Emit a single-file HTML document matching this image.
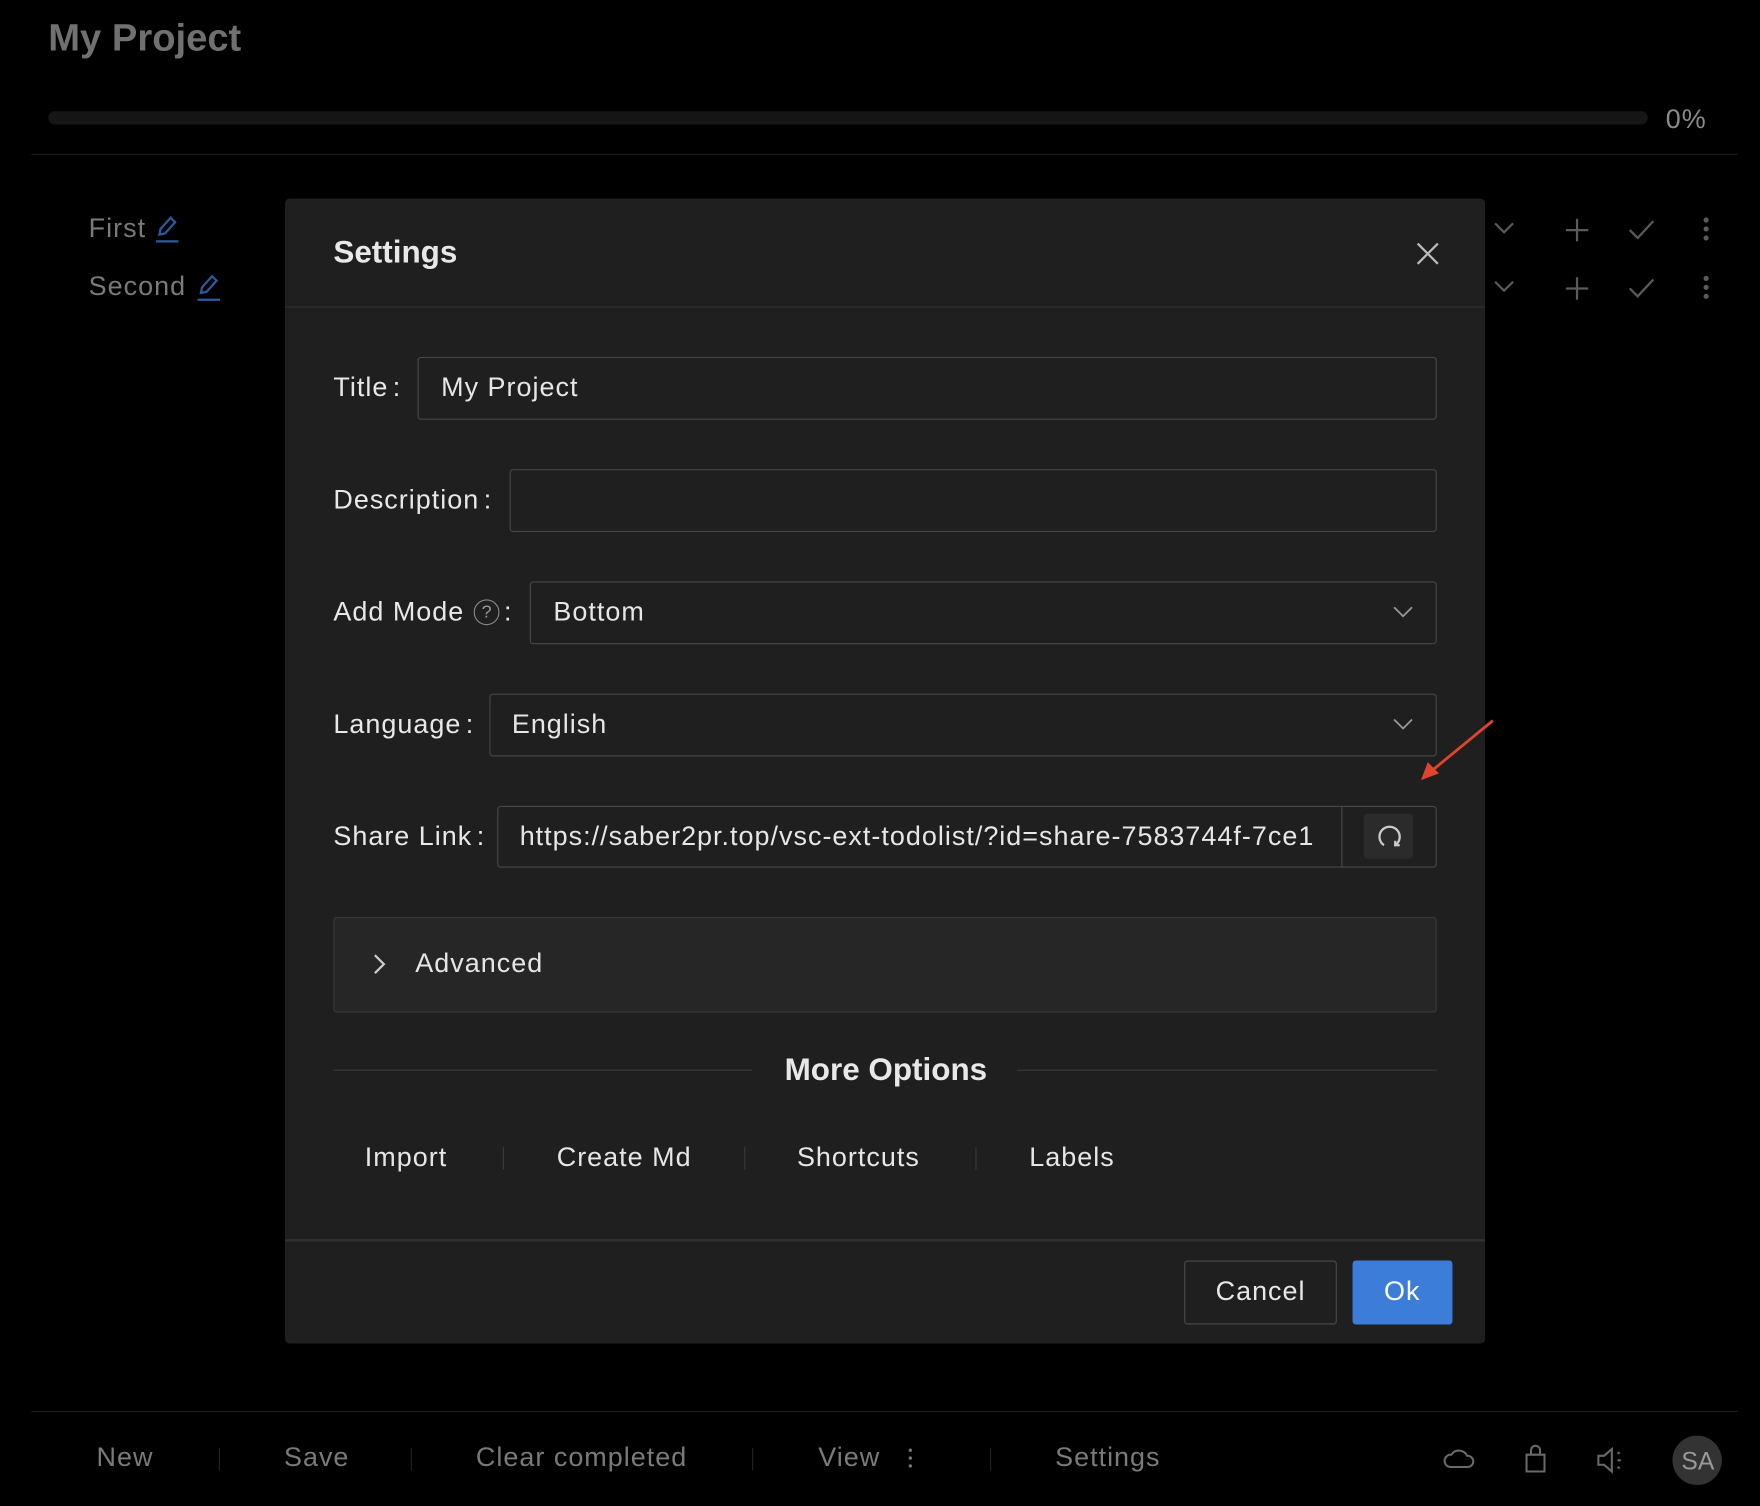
<!DOCTYPE html>
<html><head><meta charset="utf-8"><style>
html,body{margin:0;padding:0;background:#000;width:1760px;height:1506px;overflow:hidden}
#w{position:absolute;left:0;top:0;width:1568px;height:1342px;transform:scale(1.12245);transform-origin:0 0;font-family:"Liberation Sans","Noto Sans CJK SC",sans-serif;color:#e6e6e6}
.a{position:absolute}
.t{position:absolute;white-space:nowrap;line-height:1;letter-spacing:0.9px}
.inp{position:absolute;border:1px solid #474747;border-radius:3px;box-sizing:border-box;height:56px;background:#1f1f1f}
.lab{position:absolute;font-size:24px;color:#e8e8e8;line-height:1;white-space:nowrap;letter-spacing:0.9px}
.sep{position:absolute;width:1px;height:20px;background:#3a3a3a}
</style></head><body><div id="w">
<div class="t" style="left:43px;top:17px;font-size:34px;font-weight:bold;color:#707070;letter-spacing:0">My Project</div>
<div class="a" style="left:43px;top:99px;width:1425px;height:12px;border-radius:6px;background:#151515"></div>
<div class="t" style="left:1484px;top:95px;font-size:24px;color:#8a8a8a">0%</div>
<div class="a" style="left:28px;top:137px;width:1520px;height:1px;background:#1c1c1c"></div>
<div class="t" style="left:79px;top:192px;font-size:24px;color:#7a7a7a">First</div>
<div class="t" style="left:79px;top:244px;font-size:24px;color:#7a7a7a">Second</div>
<svg class="a" style="left:137px;top:191px" width="24" height="26" viewBox="0 0 24 26" fill="none" stroke="#2a5aa0" stroke-width="2"><path d="M5 18 L6 13 L15 3 L19 7 L10 17 Z"/><path d="M2 24 H22"/></svg>
<svg class="a" style="left:174px;top:243px" width="24" height="26" viewBox="0 0 24 26" fill="none" stroke="#2a5aa0" stroke-width="2"><path d="M5 18 L6 13 L15 3 L19 7 L10 17 Z"/><path d="M2 24 H22"/></svg>
<svg class="a" style="left:1320px;top:185px" width="220" height="90" viewBox="0 0 220 90" fill="none" stroke="#5a5a5a" stroke-width="2"><path d="M12 14 L20 22 L28 14"/><path d="M85 10 V30 M75 20 H95"/><path d="M132 20 L139 27 L153 12"/><circle cx="200" cy="11" r="1.3" fill="#5a5a5a"/><circle cx="200" cy="19" r="1.3" fill="#5a5a5a"/><circle cx="200" cy="27" r="1.3" fill="#5a5a5a"/>
<path d="M12 66 L20 74 L28 66"/><path d="M85 62 V82 M75 72 H95"/><path d="M132 72 L139 79 L153 64"/><circle cx="200" cy="63" r="1.3" fill="#5a5a5a"/><circle cx="200" cy="71" r="1.3" fill="#5a5a5a"/><circle cx="200" cy="79" r="1.3" fill="#5a5a5a"/></svg>

<div class="a" style="left:254px;top:177px;width:1069px;height:1020px;background:#1f1f1f;border-radius:4px"></div>
<div class="a" style="left:254px;top:273px;width:1069px;height:1px;background:#333"></div>
<div class="t" style="left:297px;top:211px;font-size:28px;font-weight:bold;color:#e8e8e8;letter-spacing:0">Settings</div>
<svg class="a" style="left:1261px;top:215px" width="22" height="22" viewBox="0 0 22 22" stroke="#bbb" stroke-width="2"><path d="M2 2 L20 20 M20 2 L2 20"/></svg>

<div class="lab" style="left:297px;top:334px">Title<span style="margin-left:4px">:</span></div>
<div class="inp" style="left:372px;top:318px;width:908px"></div>
<div class="t" style="left:393px;top:334px;font-size:24px">My Project</div>
<div class="lab" style="left:297px;top:434px">Description<span style="margin-left:4px">:</span></div>
<div class="inp" style="left:454px;top:418px;width:826px"></div>
<div class="lab" style="left:297px;top:534px">Add Mode</div>
<div class="a" style="left:422px;top:534px;width:23px;height:23px;border:1.5px solid #888;border-radius:50%;font-size:16px;text-align:center;line-height:21px;color:#999;box-sizing:border-box">?</div>
<div class="lab" style="left:449px;top:534px">:</div>
<div class="inp" style="left:472px;top:518px;width:808px"></div>
<div class="t" style="left:493px;top:534px;font-size:24px">Bottom</div>
<svg class="a" style="left:1240px;top:538px" width="20" height="14" viewBox="0 0 20 14" fill="none" stroke="#999" stroke-width="1.6"><path d="M2 3 L10 11 L18 3"/></svg>
<div class="lab" style="left:297px;top:634px">Language<span style="margin-left:4px">:</span></div>
<div class="inp" style="left:436px;top:618px;width:844px"></div>
<div class="t" style="left:456px;top:634px;font-size:24px">English</div>
<svg class="a" style="left:1240px;top:638px" width="20" height="14" viewBox="0 0 20 14" fill="none" stroke="#999" stroke-width="1.6"><path d="M2 3 L10 11 L18 3"/></svg>
<div class="lab" style="left:297px;top:734px">Share Link<span style="margin-left:4px">:</span></div>
<div class="inp" style="left:443px;top:718px;width:837px;height:55px"></div>
<div class="t" style="left:463px;top:734px;width:712px;overflow:hidden;font-size:24px">https://saber2pr.top/vsc-ext-todolist/?id=share-7583744f-7ce1</div>
<div class="a" style="left:1195px;top:718px;width:1px;height:55px;background:#474747"></div>
<div class="a" style="left:1215px;top:725px;width:44px;height:40px;background:#2b2b2b;border-radius:3px"></div>
<svg class="a" style="left:1226px;top:734px" width="24" height="24" viewBox="0 0 24 24" fill="none" stroke="#ccc" stroke-width="2"><path d="M7 19 A9 9 0 1 1 17 19"/><path d="M17 15 V19 H21"/></svg>
<svg class="a" style="left:1260px;top:638px" width="75" height="62" viewBox="0 0 75 62"><path d="M70 4 L14 50" stroke="#e0432e" stroke-width="2.5"/><path d="M6 57 L12 41 L22 51 Z" fill="#e0432e"/></svg>

<div class="a" style="left:297px;top:817px;width:983px;height:85px;box-sizing:border-box;border:1px solid #3a3a3a;border-radius:3px;background:#262626"></div>
<svg class="a" style="left:330px;top:849px" width="16" height="20" viewBox="0 0 16 20" fill="none" stroke="#ccc" stroke-width="2"><path d="M4 2 L12 10 L4 18"/></svg>
<div class="t" style="left:370px;top:847px;font-size:24px">Advanced</div>

<div class="a" style="left:297px;top:953px;width:373px;height:1px;background:#3a3a3a"></div>
<div class="a" style="left:906px;top:953px;width:374px;height:1px;background:#3a3a3a"></div>
<div class="t" style="left:699px;top:939px;font-size:28px;font-weight:bold;color:#e8e8e8;letter-spacing:0">More Options</div>
<div class="t" style="left:325px;top:1020px;font-size:24px">Import</div>
<div class="sep" style="left:448px;top:1022px"></div>
<div class="t" style="left:496px;top:1020px;font-size:24px">Create Md</div>
<div class="sep" style="left:663px;top:1022px"></div>
<div class="t" style="left:710px;top:1020px;font-size:24px">Shortcuts</div>
<div class="sep" style="left:869px;top:1022px"></div>
<div class="t" style="left:917px;top:1020px;font-size:24px">Labels</div>

<div class="a" style="left:254px;top:1104px;width:1069px;height:2px;background:#333"></div>
<div class="a" style="left:1055px;top:1123px;width:136px;height:57px;box-sizing:border-box;border:1.5px solid #4a4a4a;border-radius:3px"></div>
<div class="t" style="left:1083px;top:1139px;font-size:24px">Cancel</div>
<div class="a" style="left:1205px;top:1123px;width:89px;height:57px;background:#3b7dd8;border-radius:3px"></div>
<div class="t" style="left:1233px;top:1139px;font-size:24px;color:#fff">Ok</div>

<div class="a" style="left:28px;top:1257px;width:1520px;height:1px;background:#1e1e1e"></div>
<div class="t" style="left:86px;top:1287px;font-size:24px;color:#7a7a7a">New</div>
<div class="sep" style="left:195px;top:1290px;background:#222"></div>
<div class="t" style="left:253px;top:1287px;font-size:24px;color:#7a7a7a">Save</div>
<div class="sep" style="left:366px;top:1290px;background:#222"></div>
<div class="t" style="left:424px;top:1287px;font-size:24px;color:#7a7a7a">Clear completed</div>
<div class="sep" style="left:670px;top:1290px;background:#222"></div>
<div class="t" style="left:729px;top:1287px;font-size:24px;color:#7a7a7a">View</div>
<svg class="a" style="left:806px;top:1288px" width="10" height="24"><circle cx="5" cy="4" r="1.5" fill="#777"/><circle cx="5" cy="11" r="1.5" fill="#777"/><circle cx="5" cy="18" r="1.5" fill="#777"/></svg>
<div class="sep" style="left:882px;top:1290px;background:#222"></div>
<div class="t" style="left:940px;top:1287px;font-size:24px;color:#7a7a7a">Settings</div>
<svg class="a" style="left:1286px;top:1286px" width="170" height="30" viewBox="0 0 170 30" fill="none" stroke="#6a6a6a" stroke-width="1.8"><path d="M6 21 H22 A5 5 0 0 0 21 11 A8 8 0 0 0 7 10 A5.5 5.5 0 0 0 6 21 Z"/><path d="M74 10 H90 V25 H74 Z M78 10 V6 A4 4 0 0 1 86 6 V10"/><path d="M138 11 H143 L150 5 V25 L143 19 H138 Z M155 9 L157 8 M155 15 H158 M155 21 L157 22"/></svg>
<div class="a" style="left:1490px;top:1279px;width:44px;height:44px;border-radius:50%;background:#333"></div>
<div class="t" style="left:1498px;top:1291px;font-size:22px;color:#999;letter-spacing:0">SA</div>
</div></body></html>
